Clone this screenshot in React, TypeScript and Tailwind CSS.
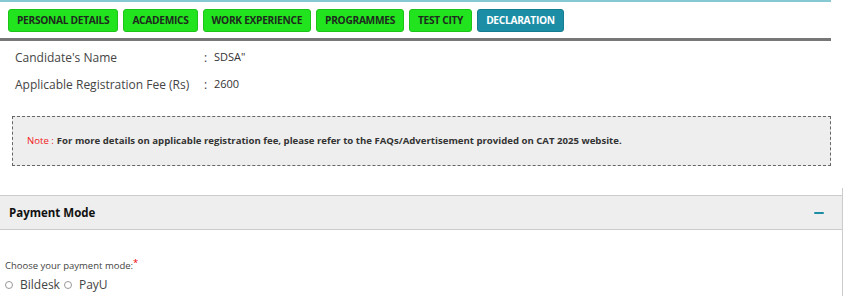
import React from 'react';

const tabs = ['PERSONAL DETAILS', 'ACADEMICS', 'WORK EXPERIENCE', 'PROGRAMMES', 'TEST CITY'];

function Tab({ label, active }: { label: string; active?: boolean }) {
    return (
        <div
            className={
                'flex h-[23px] items-center rounded-[3px] px-[8px] text-[10.2px] font-bold tracking-[-0.3px] ' +
                (active
                    ? 'bg-[#1b8ea5] text-white border border-[#167c90]'
                    : 'bg-[#22e41e] text-[#1e2a1e] border border-[#1cc41a]')
            }
        >
            {label}
        </div>
    );
}

function InfoRow({ label, value }: { label: string; value: string }) {
    return (
        <div className="flex h-[27px] items-center text-[12px] text-[#444]">
            <span className="w-[189px]">{label}</span>
            <span className="w-[10px]">:</span>
            <span className="text-[11px] text-[#333]">{value}</span>
        </div>
    );
}

function Radio({ label }: { label: string }) {
    return (
        <label className="flex items-center gap-[7px]">
            <span className="h-[8px] w-[8px] rounded-full border border-[#999] bg-white" />
            <span>{label}</span>
        </label>
    );
}

export default function App() {
    return (
        <div className="h-[307px] w-[847px] overflow-hidden bg-white font-['Open_Sans',sans-serif]">
            <div className="w-[831px] border-t-[2px] border-[#86c9d3]">
                <div className="flex gap-[5px] pl-[8px] pt-[7px] pb-[6px] border-b-[3px] border-[#777]">
                    {tabs.map((t) => (
                        <Tab key={t} label={t} />
                    ))}
                    <Tab label="DECLARATION" active />
                </div>
                <div className="pl-[15px] pt-[3px]">
                    <InfoRow label="Candidate's Name" value='SDSA"' />
                    <InfoRow label="Applicable Registration Fee (Rs)" value="2600" />
                </div>
                <div className="ml-[12px] mt-[18px] flex h-[50px] items-center border border-dashed border-[#666] bg-[#eee] pl-[14px] text-[9.6px] font-bold text-[#333]">
                    <span className="text-[#f02020] font-normal">Note :</span>
                    <span className="ml-[3px]">
                        For more details on applicable registration fee, please refer to the FAQs/Advertisement provided on CAT 2025 website.
                    </span>
                </div>
            </div>
            <div className="mt-[22px] w-[843px] border-r border-[#ccc] pt-[7px] h-[108px]">
                <div className="flex h-[35px] items-center justify-between border-y border-[#ccc] bg-[#eee] pl-[9px] pr-[18px]">
                    <span className="text-[11.5px] font-bold text-[#111]">Payment Mode</span>
                    <span className="h-[2px] w-[10px] rounded-sm bg-[#1b8ea5]" />
                </div>
                <div className="pl-[5px] pt-[29px]">
                    <div className="text-[9.5px] text-[#444]">
                        Choose your payment mode:<span className="relative -top-[3px] text-[#e00]">*</span>
                    </div>
                    <div className="mt-[3px] flex gap-[4px] text-[12px] text-[#444]">
                        <Radio label="Bildesk" />
                        <Radio label="PayU" />
                    </div>
                </div>
            </div>
        </div>
    );
}
